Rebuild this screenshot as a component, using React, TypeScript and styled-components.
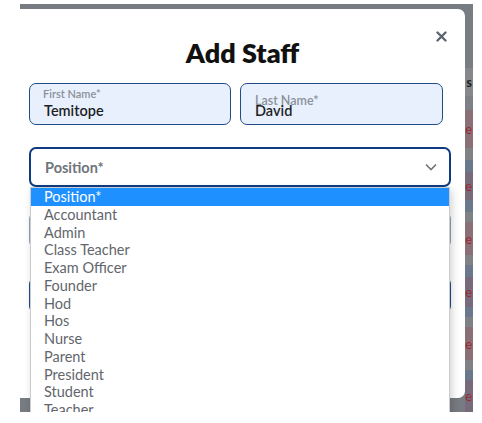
import styled, { createGlobalStyle } from "styled-components";

const GlobalStyle = createGlobalStyle`
  body {
    margin: 0;
    background: #ffffff;
    font-family: Lato, "Noto Sans", sans-serif;
  }
`;

const Frame = styled.div`
  display: flex;
  width: 453px;
  height: 408px;
  margin: 4px 0 0 20px;
  background: #777b82;
  overflow: hidden;
`;

const ModalColumn = styled.div`
  width: 445px;
  padding-top: 5px;
  flex-shrink: 0;
`;

const Modal = styled.div`
  position: relative;
  height: 389px;
  background: #ffffff;
  border-radius: 0 7px 7px 0;
`;

const Header = styled.div`
  display: flex;
  justify-content: center;
  padding: 25px 0 11px;
`;

const Title = styled.h2`
  margin: 0;
  font-size: 27px;
  line-height: 38px;
  font-weight: 800;
  color: #111111;
`;

const CloseButton = styled.button`
  position: absolute;
  top: 20px;
  right: 17px;
  width: 14px;
  height: 14px;
  padding: 0;
  border: 0;
  background: none;
  display: flex;
  align-items: center;
  justify-content: center;
`;

const Form = styled.div`
  display: flex;
  flex-direction: column;
  width: 422px;
  padding-left: 9px;
`;

const NameRow = styled.div`
  display: grid;
  grid-template-columns: 202px 203px;
  column-gap: 9px;
`;

const FloatField = styled.div`
  position: relative;
  height: 40px;
  border: 1px solid #1f4d8a;
  border-radius: 7px;
  background: #e8f0fe;
`;

const FloatLabel = styled.span<{ $lifted: boolean }>`
  position: absolute;
  left: ${(p) => (p.$lifted ? "13px" : "14px")};
  top: ${(p) => (p.$lifted ? "3px" : "9px")};
  font-size: ${(p) => (p.$lifted ? "11px" : "12.5px")};
  font-weight: 600;
  color: #8b9099;
  white-space: nowrap;
`;

const FieldValue = styled.span`
  position: absolute;
  left: 14px;
  top: 18px;
  font-size: 14.5px;
  font-weight: 600;
  color: #1d1f23;
`;

const SelectWrap = styled.div`
  position: relative;
  margin-top: 22px;
`;

const SelectBox = styled.div`
  display: flex;
  align-items: center;
  justify-content: space-between;
  height: 36px;
  padding: 0 12px 0 14px;
  border: 2px solid #0f3c80;
  border-radius: 7px;
  background: #ffffff;
  font-size: 14.5px;
  font-weight: 700;
  color: #70747b;
`;

const GhostField = styled.div<{ $edge: string }>`
  height: 34px;
  margin-top: ${(p) => (p.$edge === "navy" ? "29px" : "25px")};
  border: 1px solid ${(p) => (p.$edge === "navy" ? "#1f4d8a" : "#93a0b4")};
  border-radius: 7px;
`;

const OptionList = styled.ul`
  position: absolute;
  top: 40px;
  left: 1px;
  width: 418px;
  margin: 0;
  padding: 0;
  list-style: none;
  background: #ffffff;
  border: 1px solid #c9ccd1;
  box-shadow: 2px 3px 8px rgba(0, 0, 0, 0.18);
  z-index: 2;
`;

const Option = styled.li<{ $active?: boolean }>`
  height: 17.75px;
  line-height: 17.75px;
  padding-left: 13px;
  font-size: 14.5px;
  color: ${(p) => (p.$active ? "#ffffff" : "#62666c")};
  background: ${(p) => (p.$active ? "#1e90ff" : "transparent")};
`;

const Strip = styled.div`
  display: flex;
  flex-direction: column;
  width: 8px;
  flex-shrink: 0;
`;

const StripCell = styled.div<{ $h: number; $bg: string; $ink: string }>`
  height: ${(p) => p.$h}px;
  background: ${(p) => p.$bg};
  color: ${(p) => p.$ink};
  display: flex;
  align-items: center;
  justify-content: flex-end;
  overflow: hidden;
  font-size: 13px;
  font-weight: ${(p) => (p.$ink === "#1f1f22" ? 700 : 400)};
  padding-right: 1px;
`;

const positions = [
  "Position*",
  "Accountant",
  "Admin",
  "Class Teacher",
  "Exam Officer",
  "Founder",
  "Hod",
  "Hos",
  "Nurse",
  "Parent",
  "President",
  "Student",
  "Teacher",
];

const PINK = "#8b6f77";
const PURPLE = "#776b7b";
const GREY = "#7f8184";
const BLUE = "#6b778a";
const RED = "#9b2a2e";

const strip = [
  { h: 64, bg: "#787c83", t: "" },
  { h: 28, bg: "#85878a", t: "s", ink: "#1f1f22" },
  { h: 14, bg: "#7d8086", t: "" },
  { h: 38, bg: PINK, t: "e" },
  { h: 12, bg: GREY, t: "" },
  { h: 12, bg: BLUE, t: "" },
  { h: 28, bg: PURPLE, t: "e" },
  { h: 12, bg: BLUE, t: "" },
  { h: 10, bg: GREY, t: "" },
  { h: 33, bg: PINK, t: "e" },
  { h: 10, bg: GREY, t: "" },
  { h: 12, bg: BLUE, t: "" },
  { h: 30, bg: PURPLE, t: "e" },
  { h: 10, bg: BLUE, t: "" },
  { h: 10, bg: GREY, t: "" },
  { h: 33, bg: PINK, t: "e" },
  { h: 10, bg: GREY, t: "" },
  { h: 10, bg: BLUE, t: "" },
  { h: 32, bg: PURPLE, t: "e" },
];

function App() {
  return (
    <>
      <GlobalStyle />
      <Frame>
        <ModalColumn>
          <Modal>
            <Header>
              <Title>Add Staff</Title>
            </Header>
            <CloseButton aria-label="Close">
              <svg width="11" height="11" viewBox="0 0 11 11">
                <path
                  d="M1.5 1.5 L9.5 9.5 M9.5 1.5 L1.5 9.5"
                  stroke="#5c636e"
                  strokeWidth="2.3"
                  strokeLinecap="round"
                />
              </svg>
            </CloseButton>
            <Form>
              <NameRow>
                <FloatField>
                  <FloatLabel $lifted>First Name*</FloatLabel>
                  <FieldValue>Temitope</FieldValue>
                </FloatField>
                <FloatField>
                  <FloatLabel $lifted={false}>Last Name*</FloatLabel>
                  <FieldValue>David</FieldValue>
                </FloatField>
              </NameRow>
              <SelectWrap>
                <SelectBox>
                  <span>Position*</span>
                  <svg width="12" height="8" viewBox="0 0 12 8">
                    <path
                      d="M1 1.5 L6 6.5 L11 1.5"
                      fill="none"
                      stroke="#6f737a"
                      strokeWidth="1.6"
                    />
                  </svg>
                </SelectBox>
                <OptionList>
                  {positions.map((p, i) => (
                    <Option key={p} $active={i === 0}>
                      {p}
                    </Option>
                  ))}
                </OptionList>
              </SelectWrap>
              <GhostField $edge="grey" />
              <GhostField $edge="navy" />
            </Form>
          </Modal>
        </ModalColumn>
        <Strip>
          {strip.map((s, i) => (
            <StripCell key={i} $h={s.h} $bg={s.bg} $ink={s.ink ?? RED}>
              {s.t}
            </StripCell>
          ))}
        </Strip>
      </Frame>
    </>
  );
}

export default App;
